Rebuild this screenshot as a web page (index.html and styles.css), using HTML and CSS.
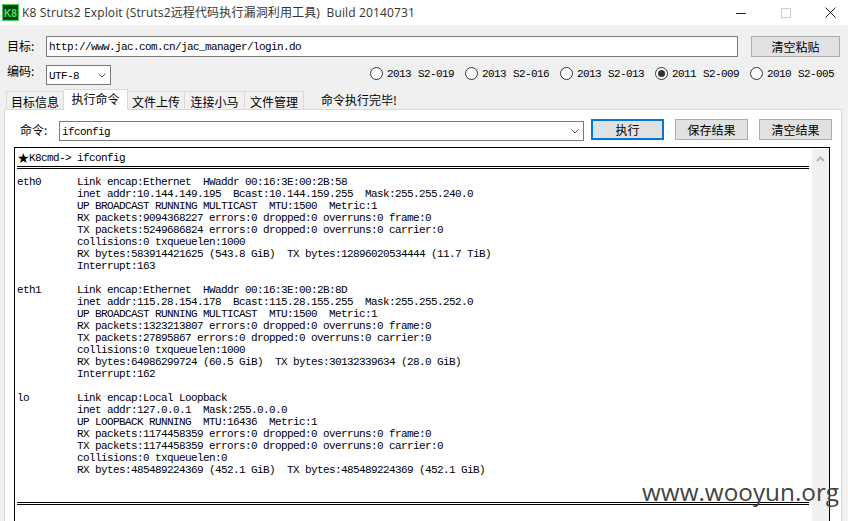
FILE: index.html
```html
<!DOCTYPE html>
<html lang="zh-CN">
<head>
<meta charset="utf-8">
<title>K8 Struts2 Exploit</title>
<link rel="stylesheet" href="styles.css">
</head>
<body>
<div class="window">
  <header class="titlebar">
    <svg class="app-icon" width="17" height="17" viewBox="0 0 17 17">
      <rect x="0.5" y="0.5" width="16" height="16" fill="#0b5a1e" stroke="#46d04e"/>
      <rect x="2" y="2" width="13" height="13" fill="#06401c"/>
      <text x="8.5" y="13" text-anchor="middle" font-family="Liberation Sans" font-size="10" font-weight="700" fill="#4be04f">K8</text>
    </svg>
    <span class="title">K8 Struts2 Exploit (Struts2远程代码执行漏洞利用工具)&nbsp; Build 20140731</span>
    <div class="winctl">
      <svg width="10" height="10" viewBox="0 0 10 10"><path d="M0 5.5H10" stroke="#222" stroke-width="1"/></svg>
      <svg width="10" height="10" viewBox="0 0 10 10"><rect x="0.5" y="0.5" width="9" height="9" fill="none" stroke="#ccc"/></svg>
      <svg width="11" height="11" viewBox="0 0 11 11"><path d="M0.5 0.5L10.5 10.5M10.5 0.5L0.5 10.5" stroke="#222" stroke-width="1"/></svg>
    </div>
  </header>

  <main class="body">
    <div class="row-target">
      <label class="lbl">目标:</label>
      <div class="field target-input mono">http://www.jac.com.cn/jac_manager/login.do</div>
      <button class="btn btn-paste">清空粘贴</button>
    </div>

    <div class="row-encode">
      <label class="lbl">编码:</label>
      <div class="field select mono">UTF-8
        <svg class="chev" width="8" height="5" viewBox="0 0 8 5"><path d="M0.5 0.5L4 4L7.5 0.5" fill="none" stroke="#555" stroke-width="1"/></svg>
      </div>
      <div class="radios mono">
        <span class="radio"><i class="dot"></i>2013 S2-019</span>
        <span class="radio"><i class="dot"></i>2013 S2-016</span>
        <span class="radio"><i class="dot"></i>2013 S2-013</span>
        <span class="radio"><i class="dot on"></i>2011 S2-009</span>
        <span class="radio"><i class="dot"></i>2010 S2-005</span>
      </div>
    </div>

    <nav class="tabs">
      <span class="tab tab-a">目标信息</span>
      <span class="tab active">执行命令</span>
      <span class="tab tab-c">文件上传</span>
      <span class="tab tab-d">连接小马</span>
      <span class="tab tab-e">文件管理</span>
      <span class="status">命令执行完毕!</span>
    </nav>

    <section class="panel">
      <div class="row-cmd">
        <label class="lbl">命令:</label>
        <div class="field combo mono">ifconfig
          <svg class="chev" width="8" height="5" viewBox="0 0 8 5"><path d="M0.5 0.5L4 4L7.5 0.5" fill="none" stroke="#555" stroke-width="1"/></svg>
        </div>
        <button class="btn btn-run">执行</button>
        <button class="btn btn-act">保存结果</button>
        <button class="btn btn-act">清空结果</button>
      </div>

      <div class="console">
        <div class="output mono">
          <div class="prompt"><span class="star">★</span>K8cmd-&gt; ifconfig</div>
          <div class="rule"></div>
<pre class="dump">eth0      Link encap:Ethernet  HWaddr 00:16:3E:00:2B:58
          inet addr:10.144.149.195  Bcast:10.144.159.255  Mask:255.255.240.0
          UP BROADCAST RUNNING MULTICAST  MTU:1500  Metric:1
          RX packets:9094368227 errors:0 dropped:0 overruns:0 frame:0
          TX packets:5249686824 errors:0 dropped:0 overruns:0 carrier:0
          collisions:0 txqueuelen:1000
          RX bytes:583914421625 (543.8 GiB)  TX bytes:12896020534444 (11.7 TiB)
          Interrupt:163

eth1      Link encap:Ethernet  HWaddr 00:16:3E:00:2B:8D
          inet addr:115.28.154.178  Bcast:115.28.155.255  Mask:255.255.252.0
          UP BROADCAST RUNNING MULTICAST  MTU:1500  Metric:1
          RX packets:1323213807 errors:0 dropped:0 overruns:0 frame:0
          TX packets:27895867 errors:0 dropped:0 overruns:0 carrier:0
          collisions:0 txqueuelen:1000
          RX bytes:64986299724 (60.5 GiB)  TX bytes:30132339634 (28.0 GiB)
          Interrupt:162

lo        Link encap:Local Loopback
          inet addr:127.0.0.1  Mask:255.0.0.0
          UP LOOPBACK RUNNING  MTU:16436  Metric:1
          RX packets:1174458359 errors:0 dropped:0 overruns:0 frame:0
          TX packets:1174458359 errors:0 dropped:0 overruns:0 carrier:0
          collisions:0 txqueuelen:0
          RX bytes:485489224369 (452.1 GiB)  TX bytes:485489224369 (452.1 GiB)</pre>
          <div class="rule rule-end"></div>
        </div>
        <div class="scrollbar">
          <svg width="9" height="6" viewBox="0 0 9 6"><path d="M1 5L4.5 1.5L8 5" fill="none" stroke="#b5b5b5" stroke-width="2"/></svg>
        </div>
      </div>
    </section>
  </main>
  <div class="watermark">www.wooyun.org</div>
</div>
</body>
</html>
```
FILE: styles.css
```css
* { box-sizing: border-box; }
html, body { margin: 0; padding: 0; }
body {
  width: 848px;
  height: 521px;
  overflow: hidden;
  background: #f0f0f0;
  font-family: "Noto Sans CJK SC", "Noto Sans", sans-serif;
  font-size: 12px;
  color: #000;
}
.window {
  position: relative;
  width: 848px;
  height: 521px;
  display: flex;
  flex-direction: column;
  overflow: hidden;
}
.mono {
  font-family: "Liberation Mono", "Noto Sans CJK SC", monospace;
  font-size: 11px;
  letter-spacing: -0.6px;
}

/* title bar */
.titlebar {
  height: 25px;
  flex: none;
  background: #fff;
  display: flex;
  align-items: center;
  padding-left: 2px;
}
.app-icon { flex: none; margin-right: 3px; }
.title {
  font-family: "Open Sans", "Noto Sans CJK SC", sans-serif;
  font-size: 12px;
  letter-spacing: 0.14px;
  color: #333;
  white-space: nowrap;
  line-height: 20px;
}
.winctl {
  margin-left: auto;
  width: 112px;
  padding-right: 12px;
  display: flex;
  justify-content: space-between;
  align-items: center;
}

/* body */
.body {
  flex: 1;
  min-height: 0;
  display: flex;
  flex-direction: column;
  padding: 11px 6px 0 4px;
}
.lbl { flex: none; line-height: 20px; white-space: nowrap; }
.field {
  flex: none;
  background: #fff;
  border: 1px solid #7a7a7a;
  color: #000;
  display: flex;
  align-items: center;
  white-space: nowrap;
}
.btn {
  flex: none;
  font-family: inherit;
  font-size: 12px;
  line-height: 1;
  padding: 0;
  background: #e1e1e1;
  border: 1px solid #adadad;
  color: #000;
}

.row-target {
  display: flex;
  align-items: center;
  height: 21px;
  padding-left: 3px;
}
.row-target .lbl { width: 39px; padding-bottom: 2px; }
.target-input { width: 692px; height: 21px; padding-left: 2px; }
.btn-paste { width: 89px; height: 21px; margin-left: 13px; }

.row-encode {
  display: flex;
  align-items: center;
  height: 21px;
  margin-top: 7px;
  padding-left: 3px;
}
.row-encode .lbl { width: 39px; align-self: flex-start; line-height: 14px; }
.select { width: 65px; height: 20px; padding: 2px 4px 0 2px; justify-content: space-between; }
.chev { margin-top: -1px; }
.radios { display: flex; flex: none; margin-left: 259px; margin-bottom: 2px; }
.radio { display: flex; align-items: center; width: 95px; white-space: pre; line-height: 14px; word-spacing: 1px; }
.dot {
  flex: none;
  width: 13px;
  height: 13px;
  border: 1px solid #333;
  border-radius: 50%;
  background: #fff;
  margin-right: 4px;
  display: flex;
  align-items: center;
  justify-content: center;
}
.dot.on::after {
  content: "";
  width: 7px;
  height: 7px;
  border-radius: 50%;
  background: #333;
}

/* tabs */
.tabs {
  display: flex;
  align-items: flex-end;
  height: 21px;
  margin-top: 4px;
  padding-left: 2px;
  margin-bottom: -1px;
  position: relative;
  z-index: 1;
}
.tab {
  flex: none;
  height: 19px;
  background: #f0f0f0;
  border: 1px solid #d9d9d9;
  border-left-width: 0;
  text-align: center;
  line-height: 19px;
}
.tab-a { width: 58px; border-left-width: 1px; }
.tab-c { width: 57px; }
.tab-d { width: 60px; }
.tab-e { width: 59px; }
.tab.active {
  height: 21px;
  width: 64px;
  background: #fff;
  border-bottom-color: #fff;
  line-height: 18px;
}
.status { margin-left: 17px; align-self: center; line-height: 20px; }

/* panel */
.panel {
  flex: 1;
  min-height: 0;
  background: #fff;
  border: 1px solid #d9d9d9;
  border-bottom: 0;
  padding: 9px 9px 0 9px;
  display: flex;
  flex-direction: column;
}
.row-cmd {
  display: flex;
  align-items: center;
  height: 21px;
  padding-left: 6px;
  flex: none;
}
.row-cmd .lbl { width: 39px; }
.combo { width: 525px; height: 20px; padding: 2px 4px 0 2px; justify-content: space-between; align-self: flex-start; margin-top: 2px; }
.btn-run { width: 73px; height: 21px; margin-left: 7px; border: 2px solid #0078d7; }
.btn-act { width: 73px; height: 21px; margin-left: 11px; }

/* console */
.console {
  flex: 1;
  min-height: 0;
  margin-top: 7px;
  width: 816px;
  border: 1px solid #000;
  border-bottom: 0;
  display: flex;
  overflow: hidden;
}
.output {
  width: 797px;
  flex: none;
  padding: 4px 0 0 2px;
  line-height: 12px;
  color: #000;
}
.prompt { height: 12px; white-space: pre; display: flex; }
.star { font-family: "DejaVu Sans", sans-serif; font-size: 14px; letter-spacing: 0; width: 12px; line-height: 12px; }
.rule { border-top: 3px double #000; margin-top: 2px; width: 792px; }
.rule-end { margin-top: 26px; }
.dump {
  margin: 7px 0 0 0;
  font: inherit;
  letter-spacing: inherit;
  line-height: 12px;
}
.scrollbar {
  flex: 1;
  margin-top: 1px;
  background: #f0f0f0;
  display: flex;
  justify-content: center;
  align-items: flex-start;
  padding-top: 7px;
  padding-right: 1px;
}

/* watermark */
.watermark {
  position: absolute;
  left: 642px;
  top: 477px;
  font-family: "Open Sans", sans-serif;
  font-size: 24.3px;
  line-height: 30px;
  color: #444;
  white-space: nowrap;
}
```
